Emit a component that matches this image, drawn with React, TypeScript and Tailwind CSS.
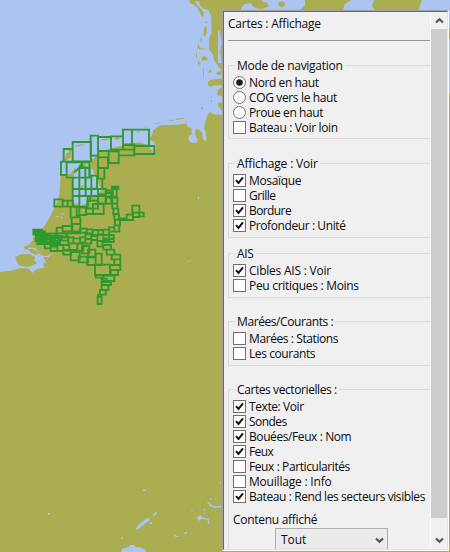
import React from 'react';

type Box = [number, number, number, number];

/* Chart outlines: x1, y1, x2, y2 in thirds of a pixel */
const northCells: Box[] = [
  [158, 81, 213, 139], [131, 102, 158, 140], [123, 140, 140, 180], [140, 142, 208, 188],
  [212, 62, 234, 122], [234, 66, 273, 108], [273, 64, 309, 104], [309, 44, 336, 90],
  [336, 44, 387, 92], [343, 93, 403, 117], [309, 88, 343, 104], [296, 104, 343, 121],
  [266, 109, 296, 144], [234, 127, 264, 159], [234, 159, 253, 191], [231, 191, 247, 222],
  [158, 188, 178, 222], [178, 159, 196, 222], [186, 142, 208, 157], [196, 159, 209, 188],
  [197, 188, 214, 222], [214, 182, 231, 222], [158, 222, 178, 243], [178, 222, 197, 243],
  [197, 222, 214, 243], [214, 222, 234, 243], [234, 222, 258, 238], [258, 226, 275, 234],
  [258, 234, 278, 245], [276, 215, 295, 222], [278, 220, 290, 245], [158, 243, 178, 275],
  [178, 243, 203, 275], [234, 243, 258, 266], [203, 243, 210, 258],
];
const southCells: Box[] = [
  [163, 208, 188, 230], [188, 212, 203, 230], [203, 212, 219, 230], [212, 230, 230, 262],
  [215, 262, 241, 282], [217, 282, 241, 307], [230, 230, 238, 258], [238, 233, 258, 255],
  [258, 235, 279, 252], [262, 212, 294, 236], [279, 222, 311, 252], [294, 198, 317, 221],
  [317, 187, 334, 203], [317, 203, 337, 221], [334, 203, 352, 221], [337, 221, 352, 236],
  [340, 236, 355, 252], [343, 252, 357, 269], [345, 269, 360, 286], [343, 286, 358, 305],
  [357, 265, 380, 270], [380, 254, 399, 270], [397, 227, 418, 248], [399, 248, 418, 261],
  [418, 248, 431, 259], [327, 292, 343, 305], [310, 299, 327, 315], [295, 300, 310, 313],
  [278, 300, 295, 315], [260, 298, 278, 313], [240, 296, 260, 308], [170, 293, 188, 310],
  [188, 288, 215, 304], [170, 310, 200, 322], [200, 304, 240, 310], [100, 299, 126, 314],
  [104, 304, 120, 310], [110, 304, 132, 318], [108, 314, 140, 320], [126, 305, 135, 325],
  [135, 310, 165, 328], [140, 318, 156, 338], [150, 318, 185, 332], [156, 324, 176, 342],
  [180, 320, 205, 332], [205, 322, 220, 340], [220, 325, 240, 340], [240, 322, 256, 337],
  [256, 310, 274, 327], [256, 327, 274, 341], [274, 318, 292, 330], [292, 315, 310, 333],
  [310, 315, 328, 330], [328, 315, 341, 327], [107, 326, 125, 334], [112, 330, 134, 342],
  [120, 336, 148, 342], [134, 340, 152, 355], [152, 350, 172, 363], [172, 345, 190, 363],
  [190, 345, 208, 360], [152, 336, 180, 345], [190, 362, 213, 374], [208, 340, 232, 360],
  [232, 341, 250, 362], [212, 366, 239, 391], [236, 380, 264, 397], [246, 348, 268, 370],
  [262, 382, 287, 405], [264, 359, 286, 380], [287, 371, 305, 405], [285, 404, 330, 435],
  [292, 333, 307, 350], [310, 345, 333, 359], [320, 359, 343, 374], [335, 374, 361, 388],
  [343, 388, 361, 405], [330, 405, 361, 420], [332, 420, 354, 435], [310, 437, 343, 453],
  [287, 435, 310, 443], [305, 446, 320, 456], [305, 456, 333, 465], [305, 465, 325, 480],
  [300, 480, 317, 494], [294, 494, 304, 500], [293, 500, 305, 522], [310, 326, 341, 336],
];
const outline = (cells: Box[]) =>
  cells.map(([a, b, c, d]) => `M${a} ${b}H${c}V${d}H${a}Z`).join('');

function ChartMap() {
  return (
    <svg className="block h-[552px] w-[450px]" viewBox="0 0 1350 1656">
      <rect width="1350" height="1656" fill="#abae50" />
      <g fill="#abc4f1">
        {/* North Sea with the Wadden coast */}
        <path d="M0 0H568L570 10 582 14 592 24 600 40 608 52 612 38 600 24 590 16 585 4 597 4 600 16 610 26 625 30 633 48 635 100 627 112 628 150 640 165 642 180 655 200 666 213V345L640 343 630 336 622 346 614 372 612 385 619 410 617 425 608 415 606 398 595 388 586 388 586 405 592 425 583 430 575 428 565 420 567 408 575 405 574 385 562 380 560 370 530 374 480 376 460 390 456 405 447 420 463 425 470 445 460 455 445 438 420 427 400 430 370 436 335 444 296 457 294 466 268 484 268 507 294 507 280 525 294 536 294 550 306 570 292 584 268 592 260 610 240 618 230 610 220 612 222 520 230 500 212 520 202 525 182 527 178 585 173 602 160 630 143 662 125 690 100 712 98 722 85 735 70 742 76 750 92 742 106 745 122 764 146 772 158 757 140 745 160 760 130 772 138 788 128 790 134 802 110 808 98 818 86 806 62 804 50 808 30 812 0 816Z" />
        <path d="M666 190 680 200 676 238 666 240ZM666 280 675 290 675 345 666 345Z" />
        {/* Baltic inlets */}
        <path d="M730 14 750 8 760 20 790 27 795 12 785 0H914L916 14 905 26 895 30 895 36H735L722 28ZM1029 30 1034 12 1055 0H1122L1116 18 1126 34H1029ZM1265 0H1350V84H1340V31H1256ZM1343 116H1350V280H1343Z" />
        <path d="M654 90 660 96 665 130 660 155 665 190 654 190Z" />
        <path d="M565 412 575 406 580 392 586 408 594 420 580 427ZM603 392 610 393 620 397 614 401ZM594 590h3v7h-3ZM572 779h3v3h-3ZM564 783h4v3h-4ZM170 648h6v4h-6ZM184 640h7v3h-7ZM180 650h8v3h-8Z" />
        {/* Inland lakes */}
        <path d="M406 1588 420 1570 440 1556 448 1553 449 1562 430 1575 412 1589ZM456 1546 470 1535 472 1540 460 1548ZM450 1566h6v6h-6ZM363 1656 366 1647 385 1641 391 1635 402 1635 408 1641 422 1642 436 1650 437 1656ZM516 1598 524 1604 530 1608 537 1608 534 1612 524 1609ZM550 1602 556 1596 564 1596 558 1602ZM591 1556 592 1551 601 1546 610 1553 626 1556 628 1571 624 1571 623 1559 604 1557 598 1562ZM620 1503 626 1506 638 1518 652 1519 663 1517V1522L644 1523 630 1518ZM612 1526h3v6h-3ZM612 1537h3v5h-3ZM630 1493h5v5h-5ZM645 1496h4v4h-4ZM660 1446h3v4h-3ZM428 1468h10v4h-10ZM144 1538h6v6h-6ZM364 1612h4v4h-4ZM574 1531h4v3h-4Z" />
      </g>
      <g fill="#abae50">
        {/* Islands */}
        <path d="M613 80H620V98L616 108 610 106ZM602 115h4v10h-4ZM596 132 600 143 614 145 614 148 598 148 592 143ZM588 160h3v15h-3ZM604 174 612 167 622 174 622 181 606 182ZM593 182 600 187 602 195 594 192ZM610 205h2v25h-2ZM626 212 636 208 632 218 626 218ZM648 218 665 212 664 224 652 225ZM624 245 632 240 666 235V255L640 256 634 262 624 256ZM652 270 660 264 666 262V288L652 286ZM656 305 666 310V333L654 318ZM603 322h6v6h-6ZM633 290h3v4h-3ZM633 301h3v4h-3ZM617 64h4v6h-4Z" />
        <path d="M462 371 482 366 480 369 464 373ZM499 360 522 359 520 363ZM526 356 552 354 550 357 530 359ZM434 384 440 380 436 388ZM408 394 420 395 414 399ZM341 416 355 411 360 416 348 419ZM300 418 330 414 320 421 304 421ZM224 437 255 431 248 436 228 440ZM205 449 218 443 216 452 208 458ZM193 480 198 460 213 455 213 470 204 478 194 484Z" />
        <path d="M45 772 65 762 90 763 106 772 102 782 112 790 84 801 56 796ZM83 748 100 746 118 760 106 765 94 758ZM765 10 800 6 806 20 780 28 765 24ZM835 6 850 4 856 14 846 22 835 16Z" />
        <path d="M278 508 292 500 292 516 282 520ZM236 495 260 489 256 500 242 505ZM240 560 252 554 246 566ZM265 568 290 561 278 573Z" />
      </g>
      <g fill="none" stroke="#2e992e" strokeWidth="5.6">
        <path transform="translate(60 345)" d={outline(northCells)} />
        <path transform="translate(0 390)" d={outline(southCells)} />
        <path d="M222 518 236 505 246 491" />
      </g>
      <rect x="337" y="559" width="18" height="9" fill="#2e992e" />
      <path d="M103 692h24l8 8 25 4 8 10-12 8-25-6-10-8-18-2Z" fill="#2e992e" fillOpacity=".75" />
    </svg>
  );
}

interface ItemProps {
  label: string;
  on?: boolean;
  radio?: boolean;
  spacing?: string;
}

function Item({ label, on, radio, spacing = '' }: ItemProps) {
  return (
    <div className="flex h-[15px] items-center gap-[3px] pl-1">
      <svg className="h-[13px] w-[13px] shrink-0" viewBox="0 0 13 13">
        {radio ? (
          <>
            <circle cx="6.5" cy="6.5" r="6" fill="#fff" stroke="#707070" />
            {on && <circle cx="6.5" cy="6.5" r="3.3" fill="#1c1c1c" />}
          </>
        ) : (
          <>
            <rect x=".5" y=".5" width="12" height="12" fill="#fff" stroke="#707070" />
            {on && <path d="M3 6.2 5.5 9 10 3.4" fill="none" stroke="#111" strokeWidth="2" />}
          </>
        )}
      </svg>
      <span className={`h-[15px] whitespace-nowrap leading-[15px] ${spacing}`}>{label}</span>
    </div>
  );
}

interface GroupProps {
  title: string;
  size: string;
  spacing?: string;
  children: React.ReactNode;
}

function Group({ title, size, spacing = '', children }: GroupProps) {
  return (
    <section className={`ml-1 shrink-0 border border-r-0 border-[#dcdcdc] ${size}`}>
      <div className={`-mt-[9px] ml-[6px] h-[18px] w-fit bg-[#f0f0f0] px-[2px] leading-[18px] ${spacing}`}>{title}</div>
      {children}
    </section>
  );
}

function Arrow({ down }: { down?: boolean }) {
  return (
    <svg className="h-[7px] w-[9px]" viewBox="0 0 9 7">
      <path d={down ? 'M1 1.5 4.5 4.8 8 1.5' : 'M1 5.5 4.5 2.2 8 5.5'} fill="none" stroke="#555" strokeWidth="2.2" />
    </svg>
  );
}

export default function App() {
  return (
    <div className="relative h-[552px] w-[450px] overflow-hidden">
      <ChartMap />
      <div className="absolute left-[222px] top-[10px] h-[541px] w-[227px] border border-b-white border-l-[#a0a0a0] border-r-white border-t-[#a0a0a0]">
        <div className="flex h-full w-full overflow-hidden border border-b-[#e3e3e3] border-l-[#696969] border-r-[#e3e3e3] border-t-[#696969] bg-[#f0f0f0] font-['Open_Sans','Noto_Sans',sans-serif] text-[12px] tracking-[-0.41px] text-[#0c0c0c]">
          <div className="flex h-full w-[206px] shrink-0 flex-col overflow-hidden">
            <div className="ml-1 h-[29px] shrink-0 border-b border-[#979797] leading-[24px] tracking-[-0.23px]">Cartes : Affichage</div>
            <div className="h-[24px] shrink-0" />
            <Group title="Mode de navigation" size="h-[74px]" spacing="tracking-[-0.28px]">
              <Item radio on label="Nord en haut" />
              <Item radio label="COG vers le haut" spacing="tracking-[-0.36px]" />
              <Item radio label="Proue en haut" />
              <Item label="Bateau : Voir loin" spacing="tracking-[-0.34px]" />
            </Group>
            <div className="h-[24px] shrink-0" />
            <Group title="Affichage : Voir" size="h-[75px]" spacing="tracking-[-0.17px]">
              <Item on label="Mosaïque" spacing="tracking-[-0.35px]" />
              <Item label="Grille" spacing="tracking-[-0.5px]" />
              <Item on label="Bordure" spacing="tracking-[-0.6px]" />
              <Item on label="Profondeur : Unité" />
            </Group>
            <div className="h-[15px] shrink-0" />
            <Group title="AIS" size="h-[45px]" spacing="tracking-[-0.3px]">
              <Item on label="Cibles AIS : Voir" spacing="tracking-[-0.22px]" />
              <Item label="Peu critiques : Moins" spacing="tracking-[-0.3px]" />
            </Group>
            <div className="h-[23px] shrink-0" />
            <Group title="Marées/Courants :" size="h-[45px]">
              <Item label="Marées : Stations" />
              <Item label="Les courants" />
            </Group>
            <div className="h-[23px] shrink-0" />
            <Group title="Cartes vectorielles :" size="h-[180px]">
              <Item on label="Texte: Voir" />
              <Item on label="Sondes" spacing="tracking-[-0.55px]" />
              <Item on label="Bouées/Feux : Nom" />
              <Item on label="Feux" spacing="tracking-[-0.6px]" />
              <Item label="Feux : Particularités" />
              <Item label="Mouillage : Info" spacing="tracking-[-0.2px]" />
              <Item on label="Bateau : Rend les secteurs visibles" />
              <div className="mt-[8px] h-4 pl-1 leading-4 tracking-[-0.29px]">Contenu affiché</div>
              <div className="ml-[46px] flex h-[24px] w-[113px] items-center justify-between border border-[#acacac] bg-[#ebebeb] pl-[5px] pr-[3px]">
                <span className="tracking-[-0.1px]">Tout</span>
                <Arrow down />
              </div>
            </Group>
          </div>
          <div className="flex w-[17px] shrink-0 flex-col items-center border-l border-[#fafafa]">
            <div className="flex h-[17px] items-center"><Arrow /></div>
            <div className="h-[489px] w-full bg-[#cdcdcd]" />
            <div className="mt-[14px] flex h-[17px] items-center"><Arrow down /></div>
          </div>
        </div>
      </div>
    </div>
  );
}
